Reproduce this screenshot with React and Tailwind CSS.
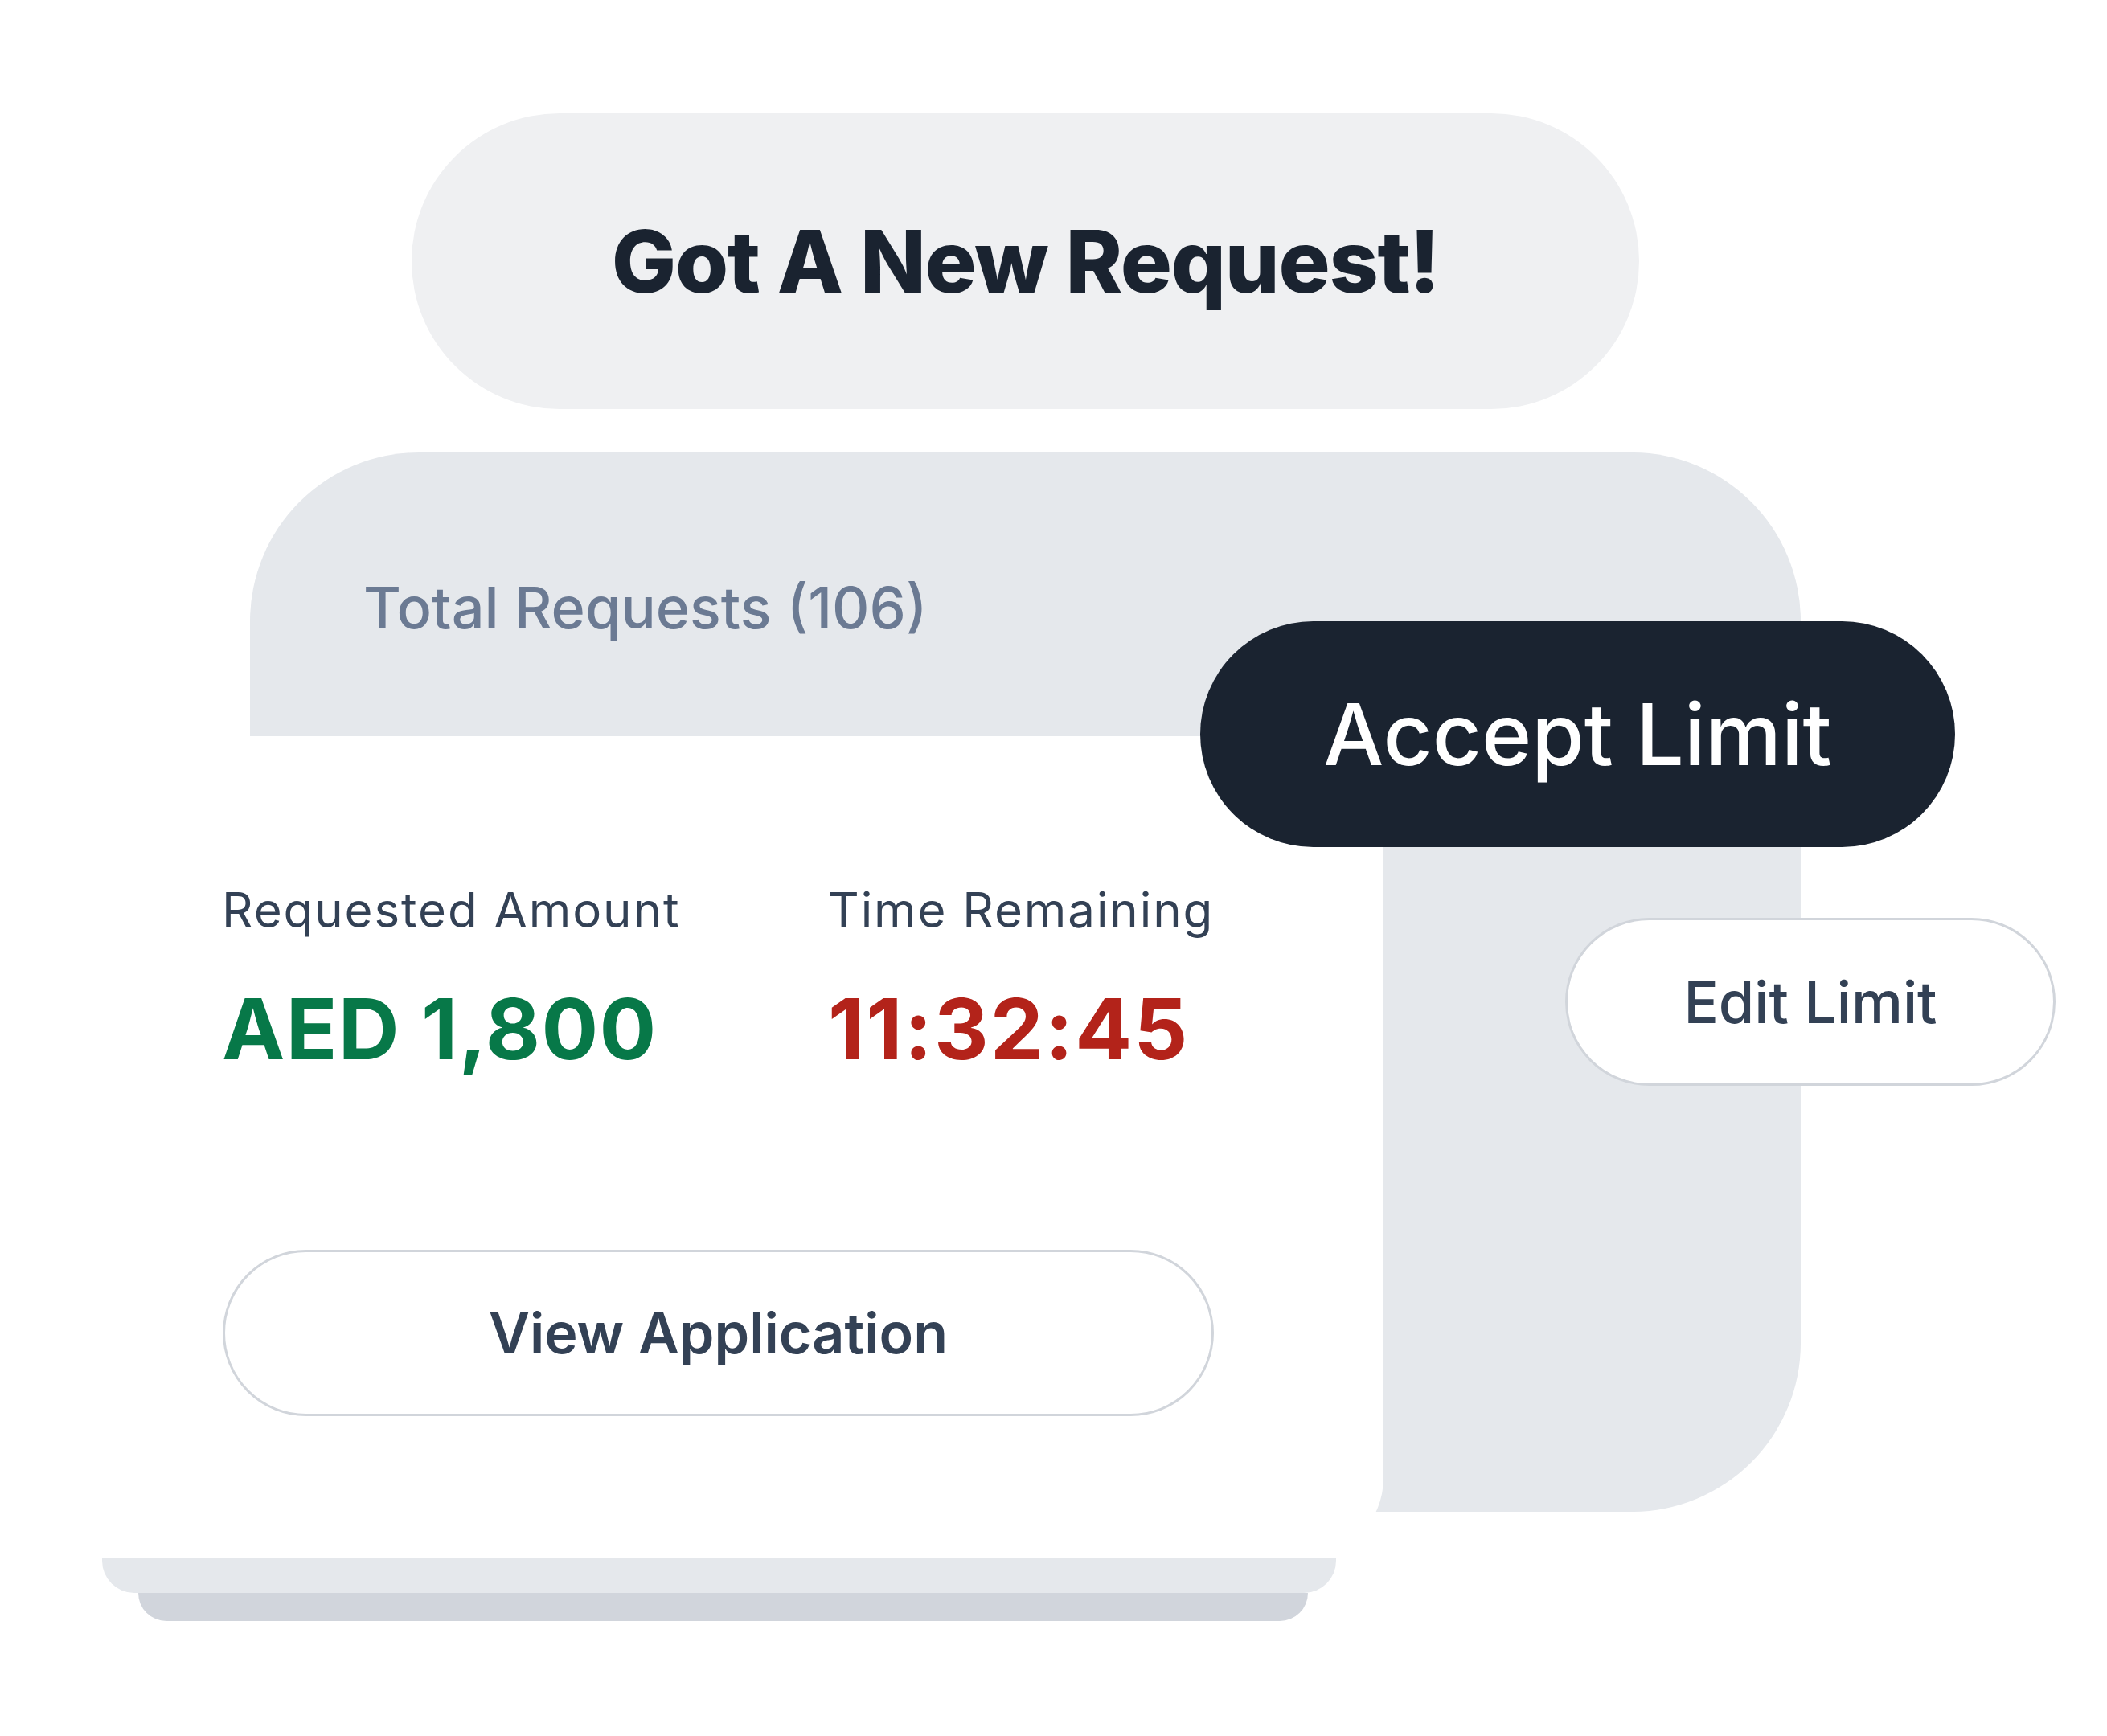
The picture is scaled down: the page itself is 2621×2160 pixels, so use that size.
import React from 'react';

function Pill({ className = '', children }) {
    return (
        <div className={`flex items-center justify-center rounded-full ${className}`}>
            {children}
        </div>
    );
}

export default function App() {
    return (
        <div className="w-[2621px] h-[2160px] bg-white pt-[141px] overflow-hidden font-['Inter',sans-serif]">
            {/* headline */}
            <Pill className="ml-[512px] w-[1527px] h-[368px] bg-[#eff0f2]">
                <span className="text-[107px] leading-none font-extrabold tracking-[-0.012em] text-[#1a2330]">
                    Got A New Request!
                </span>
            </Pill>

            {/* request card stack */}
            <div className="relative ml-[311px] mt-[54px] w-[1929px]">
                <div className="h-[1318px] bg-[#e5e8ec] rounded-tl-[210px] rounded-tr-[210px] rounded-br-[210px] pt-[157px] pl-[141px]">
                    <p className="text-[72px] leading-none font-medium text-[#6b7a93]">Total Requests (106)</p>
                </div>

                <div className="relative -mt-[965px] -ml-[242px] w-[1652px] h-[1023px] bg-white rounded-br-[100px] rounded-bl-[100px] pt-[186px] pl-[207px]">
                    <div className="flex">
                        <div className="w-[754px]">
                            <p className="text-[60px] leading-none text-[#334155] tracking-[0.032em]">Requested Amount</p>
                            <p className="mt-[65px] text-[105px] leading-none font-bold text-[#077848] tracking-[0.012em]">AED 1,800</p>
                        </div>
                        <div>
                            <p className="text-[60px] leading-none text-[#334155] tracking-[0.032em]">Time Remaining</p>
                            <p className="mt-[65px] text-[105px] leading-none font-bold text-[#b3231a] tracking-[0.02em]">11:32:45</p>
                        </div>
                    </div>
                    <Pill className="mt-[223px] ml-[1px] w-[1233px] h-[207px] border-[3px] border-[#d1d5db] bg-white">
                        <span className="text-[70px] leading-none font-semibold text-[#334155]">View Application</span>
                    </Pill>
                </div>

                <div className="-ml-[184px] w-[1535px] h-[43px] bg-[#e5e8ec] rounded-b-[40px]" />
                <div className="-ml-[139px] w-[1455px] h-[35px] bg-[#d1d5dc] rounded-b-[36px]" />

                {/* floating actions */}
                <Pill className="absolute left-[1182px] top-[210px] w-[939px] h-[281px] bg-[#1a2330]">
                    <span className="text-[106px] leading-none font-medium text-white">Accept Limit</span>
                </Pill>
                <Pill className="absolute left-[1636px] top-[579px] w-[610px] h-[209px] border-[3px] border-[#d1d5db] bg-white">
                    <span className="text-[72px] leading-none font-medium text-[#334155]">Edit Limit</span>
                </Pill>
            </div>
        </div>
    );
}
